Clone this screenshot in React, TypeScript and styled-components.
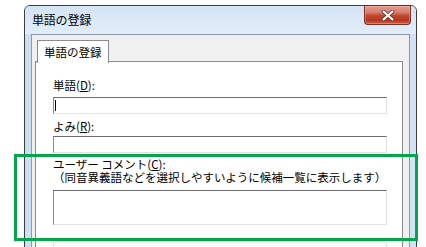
import React from "react";
import styled, { createGlobalStyle } from "styled-components";

const Global = createGlobalStyle`
  html, body { margin: 0; padding: 0; background: #ffffff; overflow: hidden; }
  body { font-family: "Noto Sans CJK JP", "Noto Sans", sans-serif; }
`;

const Page = styled.div`
  position: relative;
  width: 426px;
  height: 247px;
  overflow: hidden;
  padding: 5px 0 0 24px;
  box-sizing: border-box;
`;

const Window = styled.div`
  width: 393px;
  height: 300px;
  box-sizing: border-box;
  border: 1px solid #3a3f45;
  border-radius: 6px 6px 0 0;
  background: linear-gradient(90deg, #cde0f3 0%, #d8e7f6 40%, #d3e3f5 100%);
  display: flex;
  flex-direction: column;
`;

const TitleBar = styled.div`
  height: 28px;
  display: flex;
  align-items: flex-start;
  justify-content: space-between;
  padding: 0 5px 0 7px;
  background: linear-gradient(180deg, #d4e4f5 0%, #dce9f7 60%, #e2edf9 100%);
  border-radius: 5px 5px 0 0;
`;

const Title = styled.span`
  font-size: 12px;
  line-height: 28px;
  color: #000;
  letter-spacing: -0.2px;
`;

const CloseButton = styled.div`
  width: 47px;
  height: 19px;
  box-sizing: border-box;
  border: 1px solid #7d3329;
  border-top: none;
  border-radius: 0 0 4px 4px;
  background: linear-gradient(180deg, #e6a092 0%, #d77d6c 35%, #c0452f 55%, #b53620 80%, #cc6249 100%);
  display: flex;
  align-items: center;
  justify-content: center;
  box-shadow: inset 0 0 0 1px rgba(255, 200, 190, 0.35);
`;

const Client = styled.div`
  margin: 0 6px 0 6px;
  flex: 1;
  box-sizing: border-box;
  border: 1px solid #8d99a8;
  border-bottom: none;
  background: #f0f0f0;
  padding: 5px 6px 0 3px;
  display: flex;
  flex-direction: column;
`;

const TabStrip = styled.div`
  display: flex;
  padding-left: 2px;
  height: 22px;
  margin-bottom: -1px;
  position: relative;
  z-index: 1;
`;

const Tab = styled.div`
  width: 72px;
  height: 23px;
  box-sizing: border-box;
  border: 1px solid #898c95;
  border-bottom: none;
  background: #ffffff;
  font-size: 11.5px;
  line-height: 22px;
  padding-left: 6px;
  color: #000;
`;

const TabPanel = styled.div`
  flex: 1;
  background: #ffffff;
  border: 1px solid #898c95;
  border-bottom: none;
  padding: 17px 15px 0 17px;
  display: flex;
  flex-direction: column;
`;

const Label = styled.div<{ $top?: number }>`
  font-size: 11.5px;
  line-height: 13px;
  color: #000;
  margin-top: ${(p) => p.$top ?? 0}px;
  white-space: nowrap;
`;

const Key = styled.span`
  text-decoration: underline;
  text-underline-offset: 1px;
`;

const TextBox = styled.div<{ $h: number; $top: number }>`
  width: 334px;
  height: ${(p) => p.$h}px;
  box-sizing: border-box;
  margin-top: ${(p) => p.$top}px;
  border-style: solid;
  border-width: 1px;
  border-color: #6f6f6f #e3e3e3 #e3e3e3 #8a8a8a;
  background: #fff;
  display: flex;
  align-items: flex-start;
  padding: 2px 0 0 1px;
`;

const Caret = styled.div`
  width: 1px;
  height: 11px;
  background: #000;
`;

const GroupBox = styled.div`
  margin-top: 16px;
  height: 40px;
  border: 1px solid #d5dfe5;
  border-radius: 3px;
  position: relative;
  padding-left: 9px;
`;

const GroupLegend = styled.span`
  display: inline-block;
  font-size: 11.5px;
  line-height: 13px;
  background: #fff;
  padding: 0 1px;
  margin-top: -8px;
`;

const Highlight = styled.div`
  position: absolute;
  left: 14px;
  top: 154px;
  width: 404px;
  height: 87px;
  box-sizing: border-box;
  border: 3px solid #06a64d;
  pointer-events: none;
`;

export default function App() {
  return (
    <>
      <Global />
      <Page>
        <Window>
          <TitleBar>
            <Title>単語の登録</Title>
            <CloseButton>
              <svg width="14" height="11" viewBox="0 0 14 11">
                <path d="M2.5 1.5 L11.5 9.5 M11.5 1.5 L2.5 9.5" stroke="#5a3b38" strokeWidth="3.6" strokeLinecap="round" />
                <path d="M2.5 1.5 L11.5 9.5 M11.5 1.5 L2.5 9.5" stroke="#ffffff" strokeWidth="2" strokeLinecap="round" />
              </svg>
            </CloseButton>
          </TitleBar>
          <Client>
            <TabStrip>
              <Tab>単語の登録</Tab>
            </TabStrip>
            <TabPanel>
              <Label>
                単語(<Key>D</Key>):
              </Label>
              <TextBox $h={17} $top={5}>
                <Caret />
              </TextBox>
              <Label $top={6}>
                よみ(<Key>R</Key>):
              </Label>
              <TextBox $h={17} $top={3} />
              <Label $top={5}>
                ユーザー コメント(<Key>C</Key>):
              </Label>
              <Label>（同音異義語などを選択しやすいように候補一覧に表示します）</Label>
              <TextBox $h={35} $top={6} />
              <GroupBox>
                <GroupLegend>
                  品詞(<Key>P</Key>):
                </GroupLegend>
              </GroupBox>
            </TabPanel>
          </Client>
        </Window>
        <Highlight />
      </Page>
    </>
  );
}
